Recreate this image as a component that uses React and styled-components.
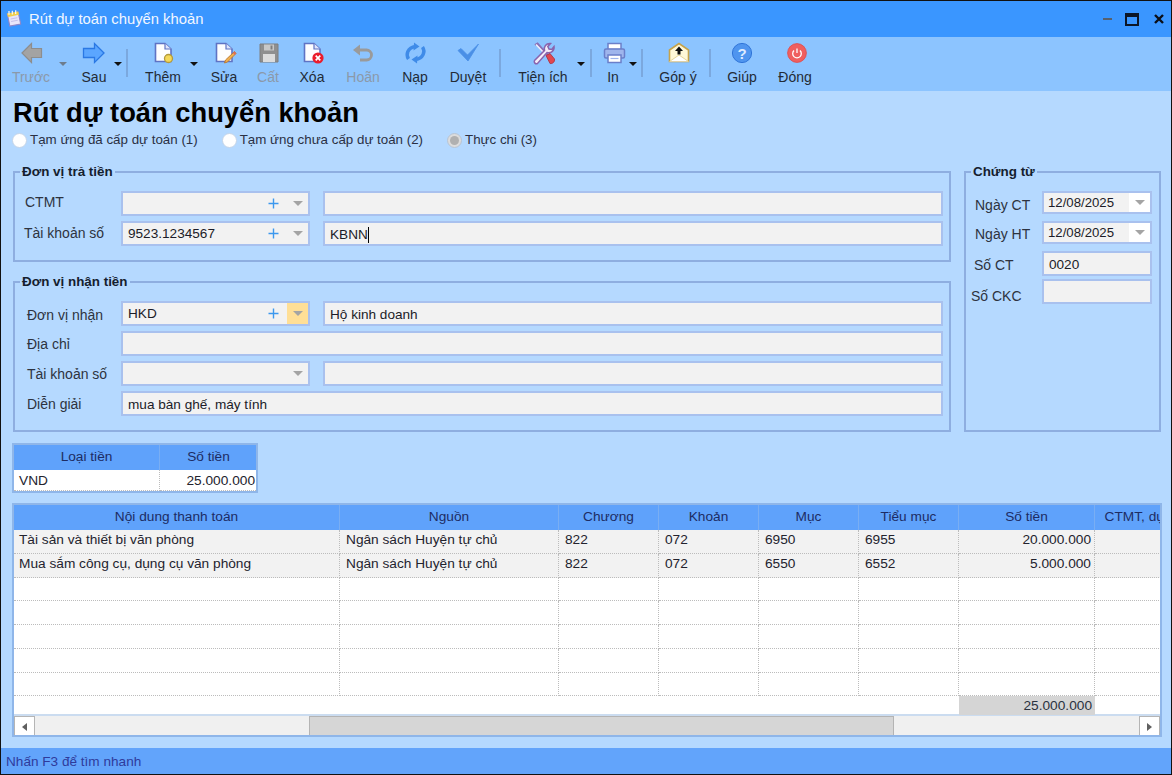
import React from "react";
import styled, { createGlobalStyle } from "styled-components";

const FONT = `"Liberation Sans", Arial, sans-serif`;

const Global = createGlobalStyle`
  html, body { margin: 0; padding: 0; background: #000; overflow: hidden; }
  * { box-sizing: border-box; }
`;

const Win = styled.div`
  width: 1172px; height: 775px; display: flex; flex-direction: column;
  border: 1px solid #111; font: 14px/16px ${FONT}; color: #2b2b2b; overflow: hidden;
`;
const TitleBar = styled.div`
  height: 36px; flex: none; background: #3a96ff; display: flex; align-items: center; padding: 0 7px 0 3px; color: #f2f7ff;
`;
const TitleText = styled.div`
  margin-left: 5px; flex: 1; font-size: 14.8px;
`;
const WinBtns = styled.div`
  display: flex; align-items: center; gap: 13px;
`;
const MinBtn = styled.div`width: 9px; height: 2px; background: #56606e;`;
const MaxBtn = styled.div`width: 14px; height: 13px; border: 2px solid #0c1626; border-top-width: 4px;`;
const CloseBtn = styled.svg`width: 10px; height: 10px; display: block; margin-left: 2px;`;

const Toolbar = styled.div`
  height: 54px; flex: none; background: #8cc4ff; display: flex; align-items: flex-start; padding: 4px 0 0 0;
`;
const Tool = styled.div`
  width: ${p => p.$w || 40}px; margin-left: ${p => p.$ml || 0}px; flex: none;
  display: flex; flex-direction: column; align-items: center; gap: 4px;
  color: ${p => (p.$off ? "#8b99aa" : "#232b36")};
  white-space: nowrap;
`;
const ToolLabel = styled.div`height: 16px; line-height: 16px; font-size: 14px;`;
const IconSvg = styled.svg`width: 24px; height: 24px; display: block; flex: none; overflow: visible;`;
const TitleIcon = styled(IconSvg)`width: 20px; height: 20px;`;
const CaretSlot = styled.div`
  flex: none; width: 8px; margin-left: ${p => p.$ml || 0}px; margin-top: 21px; height: 4px; display: flex;
  &::before { content: ""; border-left: 4px solid transparent; border-right: 4px solid transparent;
    border-top: 4px solid ${p => (p.$off ? "#6d7c8d" : "#111")}; }
`;
const Sep = styled.div`
  flex: none; width: 2px; height: 28px; margin: 8px 0 0 ${p => p.$ml || 0}px; background: #7ba8de;
`;

const Content = styled.div`
  flex: 1; min-height: 0; background: #b5d9ff; padding: 0 10px 0 11px; display: flex; flex-direction: column;
`;
const Heading = styled.h1`
  margin: 6px 0 0 1px; font: bold 27.3px/32px ${FONT}; color: #000; height: 32px; white-space: nowrap;
`;
const Radios = styled.div`display: flex; height: 20px; align-items: center; margin-top: 1px; font-size: 13.35px;`;
const Radio = styled.label`
  display: flex; align-items: center; gap: 3px; margin-left: ${p => p.$ml || 0}px; color: #2a3044; white-space: nowrap;
`;
const Dot = styled.span`
  width: 15px; height: 15px; border-radius: 50%; flex: none; background: ${p => (p.$on ? "#dcdcdc" : "#fff")};
  border: 1px solid ${p => (p.$on ? "#b7c4d4" : "#c4d4e8")}; display: flex; align-items: center; justify-content: center;
  &::after { content: ""; width: 9px; height: 9px; border-radius: 50%; background: ${p => (p.$on ? "#b0b0b0" : "transparent")}; }
`;
const Top = styled.div`display: flex; gap: 13px; margin-top: 14px; align-items: stretch;`;
const LeftCol = styled.div`width: 938px; flex: none; margin-left: 1px; display: flex; flex-direction: column; gap: 12px;`;
const Group = styled.fieldset`
  margin: 0; min-width: 0; padding: ${p => p.$pad || "11px 6px 14px 0"}; border: 2px solid #8eaee0; border-radius: 0;
  width: ${p => p.$w || "auto"}; flex: none;
`;
const Legend = styled.legend`
  margin-left: 5px; padding: 0 2px; font-weight: bold; font-size: 13.4px; line-height: 16px; color: #14202e; white-space: nowrap;
`;
const Rows = styled.div`display: flex; flex-direction: column; gap: 5px;`;
const Row = styled.div`
  display: grid; grid-template-columns: 93px 189px 1fr; column-gap: 13px; align-items: center;
`;
const RowWide = styled.div`
  display: grid; grid-template-columns: 93px 1fr; column-gap: 13px; align-items: center;
`;
const Label = styled.div`
  padding-left: ${p => p.$x ?? 10}px; position: relative; top: ${p => p.$t ?? -1}px; color: #2d3340; white-space: nowrap;
`;
const Input = styled.div`
  height: 25px; border: 2px solid #a9c1ee; background: #f2f2f2; padding: 2px 5px 0; display: flex; align-items: center;
  color: #1c1c28; white-space: nowrap; font-size: 13.6px;
`;
const TextCaret = styled.span`display: inline-block; width: 1px; height: 16px; background: #000;`;
const Combo = styled.div`
  height: 25px; border: 2px solid #a9c1ee; background: #f2f2f2; display: flex; align-items: center; color: #1c1c28; padding-left: 5px; font-size: 13.6px;
`;
const ComboText = styled.div`flex: 1; white-space: nowrap;`;
const Plus = styled.svg`width: 11px; height: 11px; flex: none; margin-right: 8px; display: block;`;
const Drop = styled.div`
  width: 21px; height: 100%; flex: none; background: ${p => p.$bg || "transparent"}; display: flex; align-items: center; justify-content: center;
  &::before { content: ""; border-left: 5px solid transparent; border-right: 5px solid transparent; border-top: 5px solid #a4a4a4; }
`;
const RightCol = styled.div`width: 197px; flex: none; display: flex;`;
const DocRow = styled.div`
  display: grid; grid-template-columns: 76px 110px; align-items: center; margin-top: ${p => p.$mt || 0}px;
`;
const DateBox = styled.div`
  height: 23px; border: 2px solid #a9c1ee; background: #f2f2f2; display: flex; align-items: center; padding-left: 4px; color: #1c1c28; font-size: 13.2px;
`;

const Grid = styled.div`
  border: 2px solid #8fb6e9; background: #fff; overflow: hidden; font-size: 13.7px;
`;
const SmallGrid = styled(Grid)`width: 246px; margin-top: 11px;`;
const BigGrid = styled(Grid)`margin: 10px 0 0 0; width: 1150px; height: 234px; display: flex; flex-direction: column; flex: none;`;
const GridRow = styled.div`
  display: grid; grid-template-columns: ${p => p.$cols}; height: ${p => p.$h}px; flex: none;
  background: ${p => p.$bg || "transparent"}; width: max-content;
`;
const Head = styled.div`
  background: #5fa2fb; color: #1d2c63; text-align: center; line-height: ${p => p.$h - 1}px; border-right: 1px solid #79aef3; overflow: hidden; white-space: nowrap;
`;
const Cell = styled.div`
  padding: 0 ${p => (p.$right ? 3 : 0)}px 0 ${p => p.$pl ?? 6}px; text-align: ${p => (p.$right ? "right" : "left")};
  line-height: ${p => p.$lh || 20}px; border-right: ${p => (p.$last ? "0" : "1px dotted #bcbcbc")}; border-bottom: 1px dotted #bcbcbc; color: #23232e; white-space: nowrap; overflow: hidden;
`;
const Foot = styled(GridRow)`background: #fff; border-bottom: 2px solid #cbdcf0;`;
const FootCell = styled.div`
  text-align: right; padding-right: 3px; line-height: 19px; background: ${p => (p.$sum ? "#d5d5d5" : "transparent")}; color: #2a3240;
`;
const Scroll = styled.div`display: flex; height: 21px; flex: none; background: #f0f0f0;`;
const ScrollBtn = styled.div`
  width: 21px; flex: none; background: #fff; border: 1px solid #b5b5b5; display: flex; align-items: center; justify-content: center;
  &::before { content: ""; border-top: 4px solid transparent; border-bottom: 4px solid transparent;
    ${p => (p.$right ? "border-left: 5px solid #606060;" : "border-right: 5px solid #606060;")} }
`;
const Thumb = styled.div`
  width: 585px; flex: none; margin-left: 274px; margin-right: auto; background: #d6d6d6; border: 1px solid #b4b4b4;
`;
const Status = styled.div`
  height: 26px; flex: none; background: #62a4fb; color: #2f3b9c; padding: 6px 0 0 5px; line-height: 16px; font-size: 13.6px;
`;

const IcoDoc = ({ children }) => (
  <IconSvg viewBox="0 0 24 24">
    <path d="M4.5 2.5H14L20 8V20.5H4.5Z" fill="#fdfdff" stroke="#5f73c4" strokeWidth="1.6" />
    <path d="M14 2.5V8H20" fill="#dfe5fa" stroke="#5f73c4" strokeWidth="1.2" />
    {children}
  </IconSvg>
);
const Back = () => (
  <IconSvg viewBox="0 0 24 24"><path d="M3 12L12.5 2.5V7.5H22.5V16.5H12.5V21.5Z" fill="#a3a3a3" stroke="#8d8d8d" strokeWidth="1.2" /></IconSvg>
);
const Next = () => (
  <IconSvg viewBox="0 0 24 24"><path d="M22 12L12.5 2.5V7.5H1.5V16.5H12.5V21.5Z" fill="#5ba6ff" stroke="#2a78e4" strokeWidth="1.3" /></IconSvg>
);
const Add = () => <IcoDoc><circle cx="17.5" cy="17.5" r="4" fill="#f4d85a" stroke="#b29a3e" strokeWidth="1.3" /></IcoDoc>;
const Edit = () => (
  <IcoDoc>
    <path d="M22.5 10.5L24 12.5L15.5 21L12.5 22L13.5 19Z" fill="#f0b050" stroke="#b9762f" strokeWidth="0.9" />
    <path d="M22.5 10.5L24 12.5L22.5 14L21 12Z" fill="#e06a5a" />
  </IcoDoc>
);
const Save = () => (
  <IconSvg viewBox="0 0 24 24">
    <path d="M4 3H22V21H4Z" fill="#8f8f8f" stroke="#7e7e7e" />
    <rect x="8" y="3.5" width="10" height="6" fill="#c8c8c8" />
    <rect x="14.5" y="4.5" width="2" height="4" fill="#7e7e7e" />
    <rect x="7" y="13" width="12" height="8" fill="#dcdcdc" />
  </IconSvg>
);
const Del = () => (
  <IcoDoc>
    <circle cx="18" cy="17" r="5.6" fill="#ea1c2c" />
    <path d="M15.7 14.7L20.3 19.3M20.3 14.7L15.7 19.3" stroke="#fff" strokeWidth="1.7" />
  </IcoDoc>
);
const Undo = () => (
  <IconSvg viewBox="0 0 24 24">
    <path d="M5 9H15.5A5 5 0 0 1 15.5 19H9" fill="none" stroke="#9a9a9a" strokeWidth="2.8" />
    <path d="M2 9L9 3.5V14.5Z" fill="#9a9a9a" />
  </IconSvg>
);
const Reload = () => (
  <IconSvg viewBox="0 0 24 24">
    <path d="M5.5 18C2.5 13.5 4.5 6.5 12.5 5.5" fill="none" stroke="#3f8be8" strokeWidth="3.4" />
    <path d="M11 1.5L16.5 5.5L10.5 9.5Z" fill="#3f8be8" />
    <path d="M19.5 6C22.5 10.5 20.5 17.5 12.5 18.5" fill="none" stroke="#3f8be8" strokeWidth="3.4" />
    <path d="M14 22.5L8.5 18.5L14.5 14.5Z" fill="#3f8be8" />
  </IconSvg>
);
const Check = () => (
  <IconSvg viewBox="0 0 24 24"><path d="M2 9.5L5 7.5L11.5 14L22.5 3L12 20Z" fill="#4a8fe6" stroke="#4a8fe6" strokeWidth="0.8" strokeLinejoin="round" /></IconSvg>
);
const Tools = () => (
  <IconSvg viewBox="0 0 24 24">
    <path d="M4 4L6.5 2.5L14 11L20 17" fill="none" stroke="#8a6fb5" strokeWidth="2" />
    <path d="M5 3.5L14.5 13.5" stroke="#f4effa" strokeWidth="1.4" />
    <path d="M3.5 19.5L13.5 9.5C12.5 6 15 2 19.5 2.5L16.8 5.5L18 8L20.8 8.5L23 5.5C23.8 10 19.5 12.5 16 11.5L6.5 22.5C4.5 23.5 2.5 21.5 3.5 19.5Z" fill="#f4edf8" stroke="#8a63ad" strokeWidth="1.5" />
    <path d="M15 14.5L19 12.5L23.5 18C24 21 21.5 23 19 22.5Z" fill="#e2464e" stroke="#a83040" strokeWidth="0.8" />
  </IconSvg>
);
const Printer = () => (
  <IconSvg viewBox="0 0 24 24">
    <rect x="7" y="2.5" width="13" height="6" fill="#fff" stroke="#6b7fc9" strokeWidth="1.5" />
    <rect x="3.5" y="8" width="20" height="9" rx="1.5" fill="#9fb5ec" stroke="#6b7fc9" strokeWidth="1.5" />
    <rect x="7" y="14" width="13" height="7.5" fill="#fff" stroke="#6b7fc9" strokeWidth="1.5" />
    <path d="M9.5 17.5H17.5" stroke="#9fb5ec" strokeWidth="1.2" />
  </IconSvg>
);
const Mail = () => (
  <IconSvg viewBox="0 0 24 24">
    <path d="M3.5 9L13 2.5L22.5 9V20.5H3.5Z" fill="#fff8d8" stroke="#c5a34c" strokeWidth="1.6" />
    <path d="M3.5 20.5L13 14L22.5 20.5" fill="#fff" stroke="#e8d79a" strokeWidth="1" />
    <path d="M13 5.5L17 10H14.5V13.5H11.5V10H9Z" fill="#111" />
  </IconSvg>
);
const Help = () => (
  <IconSvg viewBox="0 0 24 24">
    <circle cx="12" cy="12" r="9.6" fill="#4f95ef" stroke="#2f74d8" strokeWidth="1" />
    <text x="12" y="17.5" textAnchor="middle" fontFamily={FONT} fontWeight="bold" fontSize="15" fill="#dcebff">?</text>
  </IconSvg>
);
const Power = () => (
  <IconSvg viewBox="0 0 24 24">
    <circle cx="14" cy="12" r="9.4" fill="#ef5f5f" stroke="#e04848" strokeWidth="0.8" />
    <path d="M11 9.5A4.3 4.3 0 1 0 17 9.5" fill="none" stroke="#fff" strokeWidth="1.3" />
    <path d="M14 7.5V12" stroke="#fff" strokeWidth="1.3" />
  </IconSvg>
);
const AppIcon = () => (
  <TitleIcon viewBox="0 0 24 24">
    <path d="M4 6L17 3.5L20 18L7 20.5Z" fill="#e9e6fa" stroke="#8f86c8" strokeWidth="1.3" />
    <path d="M3.5 5.5L17 3L18 7L5 9.5Z" fill="#f0cf4a" />
    <path d="M6 2.5V7M10 2V6.5M14 1.5V6" stroke="#f7f7f7" strokeWidth="1.5" />
    <path d="M8 12L16 10.5M8.5 15L16.5 13.5" stroke="#c7c1ea" strokeWidth="1.2" />
  </TitleIcon>
);
const PlusIcon = () => (
  <Plus viewBox="0 0 11 11"><path d="M5.5 0.5V10.5M0.5 5.5H10.5" stroke="#3c98ee" strokeWidth="1.4" /></Plus>
);

const bigCols = "326px 219px 100px 100px 100px 100px 136px 100px";
const rows = [
  ["Tài sản và thiết bị văn phòng", "Ngân sách Huyện tự chủ", "822", "072", "6950", "6955", "20.000.000"],
  ["Mua sắm công cụ, dụng cụ văn phòng", "Ngân sách Huyện tự chủ", "822", "072", "6550", "6552", "5.000.000"],
  ["", "", "", "", "", "", ""], ["", "", "", "", "", "", ""], ["", "", "", "", "", "", ""], ["", "", "", "", "", "", ""], ["", "", "", "", "", "", ""],
];
const heads = ["Nội dung thanh toán", "Nguồn", "Chương", "Khoản", "Mục", "Tiểu mục", "Số tiền", "CTMT, dự án"];

export default function App() {
  return (
    <Win>
      <Global />
      <TitleBar>
        <AppIcon />
        <TitleText>Rút dự toán chuyển khoản</TitleText>
        <WinBtns>
          <MinBtn />
          <MaxBtn />
          <CloseBtn viewBox="0 0 10 10"><path d="M1 1L9 9M9 1L1 9" stroke="#0b0f18" strokeWidth="2.4" /></CloseBtn>
        </WinBtns>
      </TitleBar>
      <Toolbar>
        <Tool $ml={10} $off><Back /><ToolLabel>Trước</ToolLabel></Tool>
        <CaretSlot $ml={8} $off />
        <Tool $ml={7}><Next /><ToolLabel>Sau</ToolLabel></Tool>
        <CaretSlot />
        <Sep $ml={4} />
        <Tool $ml={15}><Add /><ToolLabel>Thêm</ToolLabel></Tool>
        <CaretSlot $ml={7} />
        <Tool $ml={6}><Edit /><ToolLabel>Sửa</ToolLabel></Tool>
        <Tool $ml={4} $off><Save /><ToolLabel>Cất</ToolLabel></Tool>
        <Tool $ml={4}><Del /><ToolLabel>Xóa</ToolLabel></Tool>
        <Tool $ml={11} $off><Undo /><ToolLabel>Hoãn</ToolLabel></Tool>
        <Tool $ml={12}><Reload /><ToolLabel>Nạp</ToolLabel></Tool>
        <Tool $ml={13}><Check /><ToolLabel>Duyệt</ToolLabel></Tool>
        <Sep $ml={11} />
        <Tool $ml={15} $w={54}><Tools /><ToolLabel>Tiện ích</ToolLabel></Tool>
        <CaretSlot $ml={7} />
        <Sep $ml={5} />
        <Tool $ml={9} $w={24}><Printer /><ToolLabel>In</ToolLabel></Tool>
        <CaretSlot $ml={4} />
        <Sep $ml={4} />
        <Tool $ml={13} $w={44}><Mail /><ToolLabel>Góp ý</ToolLabel></Tool>
        <Sep $ml={9} />
        <Tool $ml={11}><Help /><ToolLabel>Giúp</ToolLabel></Tool>
        <Tool $ml={13}><Power /><ToolLabel>Đóng</ToolLabel></Tool>
      </Toolbar>
      <Content>
        <Heading>Rút dự toán chuyển khoản</Heading>
        <Radios>
          <Radio><Dot />Tạm ứng đã cấp dự toán (1)</Radio>
          <Radio $ml={24}><Dot />Tạm ứng chưa cấp dự toán (2)</Radio>
          <Radio $ml={24}><Dot $on />Thực chi (3)</Radio>
        </Radios>
        <Top>
          <LeftCol>
            <Group>
              <Legend>Đơn vị trả tiền</Legend>
              <Rows>
                <Row>
                  <Label $x={10} $t={-2}>CTMT</Label>
                  <Combo><ComboText /><PlusIcon /><Drop /></Combo>
                  <Input />
                </Row>
                <Row>
                  <Label $x={9}>Tài khoản số</Label>
                  <Combo><ComboText>9523.1234567</ComboText><PlusIcon /><Drop /></Combo>
                  <Input>KBNN<TextCaret /></Input>
                </Row>
              </Rows>
            </Group>
            <Group>
              <Legend>Đơn vị nhận tiền</Legend>
              <Rows>
                <Row>
                  <Label $x={12} $t={1}>Đơn vị nhận</Label>
                  <Combo><ComboText>HKD</ComboText><PlusIcon /><Drop $bg="#ffdf96" /></Combo>
                  <Input>Hộ kinh doanh</Input>
                </Row>
                <RowWide>
                  <Label $x={12} $t={0}>Địa chỉ</Label>
                  <Input />
                </RowWide>
                <Row>
                  <Label $x={12} $t={0}>Tài khoản số</Label>
                  <Combo><ComboText /><Drop /></Combo>
                  <Input />
                </Row>
                <RowWide>
                  <Label $x={12} $t={0}>Diễn giải</Label>
                  <Input>mua bàn ghế, máy tính</Input>
                </RowWide>
              </Rows>
            </Group>
          </LeftCol>
          <RightCol>
            <Group $w="197px" $pad="11px 0 0 0">
              <Legend>Chứng từ</Legend>
              <DocRow>
                <Label $x={9} $t={2}>Ngày CT</Label>
                <DateBox><ComboText>12/08/2025</ComboText><Drop $bg="#fff" /></DateBox>
              </DocRow>
              <DocRow $mt={7}>
                <Label $x={9} $t={1}>Ngày HT</Label>
                <DateBox><ComboText>12/08/2025</ComboText><Drop $bg="#fff" /></DateBox>
              </DocRow>
              <DocRow $mt={7}>
                <Label $x={8} $t={1}>Số CT</Label>
                <Input>0020</Input>
              </DocRow>
              <DocRow $mt={3}>
                <Label $x={5} $t={4}>Số CKC</Label>
                <Input />
              </DocRow>
            </Group>
          </RightCol>
        </Top>
        <SmallGrid>
          <GridRow $cols="146px 98px" $h={25}>
            <Head $h={25}>Loại tiền</Head>
            <Head $h={25}>Số tiền</Head>
          </GridRow>
          <GridRow $cols="146px 98px" $h={21}>
            <Cell $pl={5} $lh={21}>VND</Cell>
            <Cell $right $last $pl={0} $lh={21}>25.000.000</Cell>
          </GridRow>
        </SmallGrid>
        <BigGrid>
          <GridRow $cols={bigCols} $h={25}>
            {heads.map(h => <Head key={h} $h={25}>{h}</Head>)}
          </GridRow>
          {rows.map((r, i) => (
            <GridRow key={i} $cols={bigCols} $h={23.75} $bg={r[0] ? "#f2f2f2" : "#fff"}>
              {r.map((c, j) => (
                <Cell key={j} $right={j === 6} $pl={j === 0 ? 5 : 6}>{c}</Cell>
              ))}
              <Cell />
            </GridRow>
          ))}
          <Foot $cols="945px 136px 67px" $h={20}>
            <FootCell />
            <FootCell $sum>25.000.000</FootCell>
            <FootCell />
          </Foot>
          <Scroll>
            <ScrollBtn />
            <Thumb />
            <ScrollBtn $right />
          </Scroll>
        </BigGrid>
      </Content>
      <Status>Nhấn F3 để tìm nhanh</Status>
    </Win>
  );
}
